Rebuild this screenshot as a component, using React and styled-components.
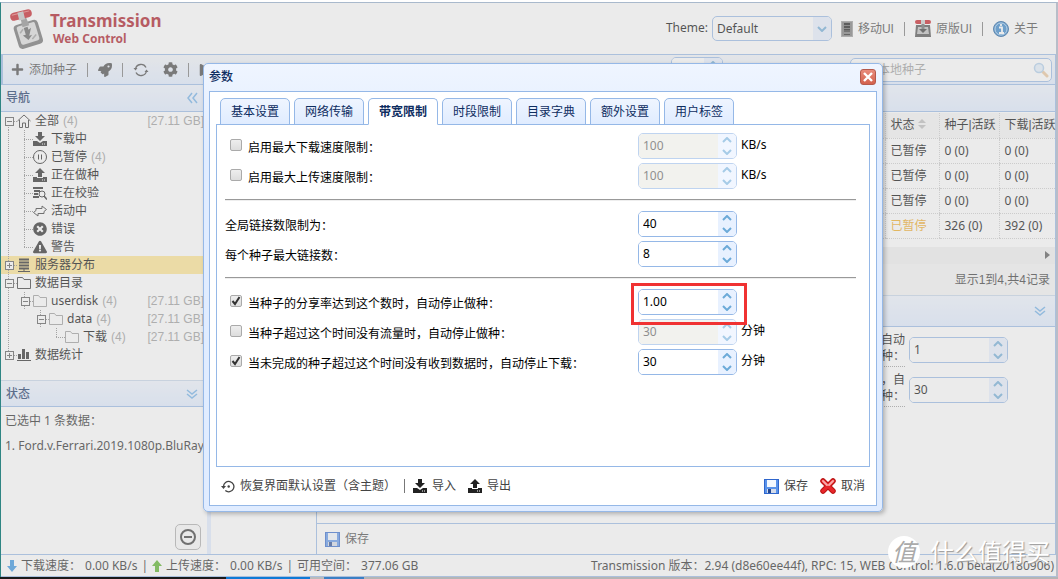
import React from "react";
import styled, { createGlobalStyle, css } from "styled-components";
import {
  FaPlus,
  FaRocket,
  FaCog,
  FaTimesCircle,
  FaExclamationTriangle,
  FaPlay,
  FaPause,
  FaTrashAlt,
} from "react-icons/fa";

const treeItems = [
  { cells: ["minusTop"], icon: "home", text: "全部", count: 4, size: "27.11 GB" },
  { cells: ["line", "join"], icon: "download", text: "下载中" },
  { cells: ["line", "join"], icon: "pause", text: "已暂停", count: 4 },
  { cells: ["line", "join"], icon: "upload", text: "正在做种" },
  { cells: ["line", "join"], icon: "check", text: "正在校验" },
  { cells: ["line", "join"], icon: "active", text: "活动中" },
  { cells: ["line", "join"], icon: "error", text: "错误" },
  { cells: ["line", "joinEnd"], icon: "warning", text: "警告" },
  { cells: ["plus"], icon: "server", text: "服务器分布", selected: true },
  { cells: ["minus"], icon: "folder", text: "数据目录" },
  { cells: ["line", "minus"], icon: "folder", text: "userdisk", count: 4, size: "27.11 GB", pale: true },
  { cells: ["line", "blank", "minus"], icon: "folder", text: "data", count: 4, size: "27.11 GB", pale: true },
  { cells: ["line", "blank", "blank", "joinEnd"], icon: "folder", text: "下载", count: 4, size: "27.11 GB", pale: true },
  { cells: ["plusEnd"], icon: "chart", text: "数据统计" },
];

const torrents = [
  { status: "已暂停", seeds: "0 (0)", peers: "0 (0)" },
  { status: "已暂停", seeds: "0 (0)", peers: "0 (0)" },
  { status: "已暂停", seeds: "0 (0)", peers: "0 (0)" },
  { status: "已暂停", seeds: "326 (0)", peers: "392 (0)", warning: true },
];

const tabs = ["基本设置", "网络传输", "带宽限制", "时段限制", "目录字典", "额外设置", "用户标签"];

export default function App() {
  return (
    <>
      <GlobalStyle />
      <Page>
        <Frame>
          <Header />
          <Toolbar />
          <Workspace>
            <Sidebar />
            <Splitter />
            <Main />
          </Workspace>
          <StatusBar />
          <Mask />
          <SettingsDialog />
          <Watermark>
            <WatermarkLogo>值</WatermarkLogo>
            什么值得买
          </Watermark>
        </Frame>
        <Taskbar />
      </Page>
    </>
  );
}

function Header() {
  return (
    <HeaderBar>
      <Brand>
        <LogoIcon />
        <BrandText>
          <BrandName>Transmission</BrandName>
          <BrandSub>Web Control</BrandSub>
        </BrandText>
      </Brand>
      <HeaderLinks>
        <ThemeLabel htmlFor="theme">Theme:</ThemeLabel>
        <SelectBox>
          <ThemeSelect id="theme" defaultValue="Default">
            <option>Default</option>
          </ThemeSelect>
          <SelectArrow>
            <Chevron down />
          </SelectArrow>
        </SelectBox>
        <HeaderLink href="#mobile">
          <PhoneIcon />
          移动UI
        </HeaderLink>
        <Separator />
        <HeaderLink href="#original">
          <OriginalIcon />
          原版UI
        </HeaderLink>
        <Separator />
        <HeaderLink href="#about">
          <InfoIcon />
          关于
        </HeaderLink>
      </HeaderLinks>
    </HeaderBar>
  );
}

function Toolbar() {
  return (
    <ToolbarRow>
      <ToolGroup>
        <ToolButton>
          <FaPlus size={13} />
          添加种子
        </ToolButton>
        <Separator />
        <ToolButton aria-label="rocket">
          <FaRocket size={14} />
        </ToolButton>
        <Separator />
        <ToolButton aria-label="refresh">
          <RefreshIcon />
        </ToolButton>
        <ToolButton aria-label="config">
          <FaCog size={15} />
        </ToolButton>
        <Separator />
        <ToolButton aria-label="start">
          <FaPlay size={12} />
        </ToolButton>
        <ToolButton aria-label="pause">
          <FaPause size={12} />
        </ToolButton>
        <ToolButton aria-label="remove">
          <FaTrashAlt size={12} />
        </ToolButton>
      </ToolGroup>
      <ToolGroup>
        <Spinner id="reload" value="5" label="reload" />
        <SearchBox>
          <SearchInput aria-label="搜索" placeholder="搜索本地种子" />
          <SearchIcon />
        </SearchBox>
      </ToolGroup>
    </ToolbarRow>
  );
}

function Sidebar() {
  return (
    <SidebarColumn>
      <PanelHeader>
        导航
        <DoubleChevron left />
      </PanelHeader>
      <Tree>
        {treeItems.map((item, index) => (
          <TreeRow key={index} $selected={item.selected}>
            {item.cells.map((cell, i) => (
              <TreeCell key={i} $kind={cell}>
                {/^(minus|plus)/.test(cell) && <Expander plus={cell.startsWith("plus")} />}
              </TreeCell>
            ))}
            <TreeIcon $pale={item.pale}>{treeIcons[item.icon]}</TreeIcon>
            <span>{item.text}</span>
            {item.count && <Muted>({item.count})</Muted>}
            {item.size && <TreeSize>[{item.size}]</TreeSize>}
          </TreeRow>
        ))}
      </Tree>
      <PanelHeader $top>
        状态
        <DoubleChevron />
      </PanelHeader>
      <StatusBody>
        <StatusLine>已选中 1 条数据：</StatusLine>
        <StatusLine>1. Ford.v.Ferrari.2019.1080p.BluRay</StatusLine>
      </StatusBody>
      <CollapseButton aria-label="collapse">
        <svg width="18" height="18" viewBox="0 0 18 18" fill="none" stroke="#333" strokeWidth="2">
          <circle cx="9" cy="9" r="7" />
          <path d="M5 9h8" />
        </svg>
      </CollapseButton>
    </SidebarColumn>
  );
}

function Main() {
  return (
    <MainColumn>
      <PanelHeader />
      <TorrentTable>
        <thead>
          <tr>
            <Th />
            <Th $width={54}>
              状态 <SortIcon />
            </Th>
            <Th $width={60}>种子|活跃</Th>
            <Th $width={56}>下载|活跃</Th>
          </tr>
        </thead>
        <tbody>
          {torrents.map((row, index) => (
            <tr key={index}>
              <Td />
              <Td $warning={row.warning}>{row.status}</Td>
              <Td>{row.seeds}</Td>
              <Td>{row.peers}</Td>
            </tr>
          ))}
        </tbody>
      </TorrentTable>
      <ScrollTrack>
        <svg width="5" height="8" viewBox="0 0 5 8">
          <path d="M0 0l5 4-5 4z" fill="#505050" />
        </svg>
      </ScrollTrack>
      <Pager>显示1到4,共4记录</Pager>
      <PanelHeader $top $tall>
        <span />
        <DoubleChevron />
      </PanelHeader>
      <Detail>
        <DetailBody>
          <DetailRow>
            <DetailLabel htmlFor="detail-ratio">
              达到这个数时，自动
              <br />
              停止做种：
            </DetailLabel>
            <Spinner id="detail-ratio" value="1" />
          </DetailRow>
          <DetailRow>
            <DetailLabel htmlFor="detail-idle">
              没有流量时，自
              <br />
              动停止做种：
            </DetailLabel>
            <Spinner id="detail-idle" value="30" />
          </DetailRow>
        </DetailBody>
        <DetailFooter>
          <ToolButton>
            <SaveIcon />
            保存
          </ToolButton>
        </DetailFooter>
      </Detail>
    </MainColumn>
  );
}

function StatusBar() {
  return (
    <StatusFooter>
      <FooterGroup>
        <ArrowIcon color="#2f8fe0" down />
        <span>下载速度：</span>
        <span>0.00 KB/s</span>
        <span>|</span>
        <ArrowIcon color="#52b01e" />
        <span>上传速度：</span>
        <span>0.00 KB/s</span>
        <span>|</span>
        <span>可用空间：</span>
        <span>377.06 GB</span>
      </FooterGroup>
      <span>Transmission 版本：2.94 (d8e60ee44f), RPC: 15, WEB Control: 1.6.0 beta(20180906)</span>
    </StatusFooter>
  );
}

function SettingsDialog() {
  return (
    <Dialog role="dialog" aria-labelledby="dialog-title">
      <DialogHeader>
        <DialogTitle id="dialog-title">参数</DialogTitle>
        <CloseButton aria-label="close">
          <svg width="10" height="10" viewBox="0 0 10 10" stroke="#fff" strokeWidth="2.4">
            <path d="M1 1l8 8M9 1l-8 8" />
          </svg>
        </CloseButton>
      </DialogHeader>
      <DialogBody>
        <TabList role="tablist">
          {tabs.map((tab) => (
            <Tab key={tab} role="tab" $active={tab === "带宽限制"} aria-selected={tab === "带宽限制"}>
              {tab}
            </Tab>
          ))}
        </TabList>
        <TabPanel>
          <Setting id="limit-down" check label="启用最大下载速度限制：" value="100" unit="KB/s" disabled />
          <Setting id="limit-up" check label="启用最大上传速度限制：" value="100" unit="KB/s" disabled />
          <Divider />
          <Setting id="peer-global" label="全局链接数限制为：" value="40" />
          <Setting id="peer-torrent" label="每个种子最大链接数：" value="8" />
          <Divider />
          <Setting
            id="seed-ratio"
            check
            checked
            label="当种子的分享率达到这个数时，自动停止做种："
            value="1.00"
            highlight
          />
          <Setting id="seed-idle" check label="当种子超过这个时间没有流量时，自动停止做种：" value="30" unit="分钟" disabled />
          <Setting
            id="queue-stalled"
            check
            checked
            label="当未完成的种子超过这个时间没有收到数据时，自动停止下载："
            value="30"
            unit="分钟"
          />
        </TabPanel>
        <DialogFooter>
          <FooterButtons>
            <ToolButton>
              <RestoreIcon />
              恢复界面默认设置（含主题）
            </ToolButton>
            <Separator />
            <ToolButton>
              {treeIcons.download}
              导入
            </ToolButton>
            <ToolButton>
              {treeIcons.upload}
              导出
            </ToolButton>
          </FooterButtons>
          <FooterButtons>
            <ToolButton>
              <SaveIcon />
              保存
            </ToolButton>
            <ToolButton>
              <CancelIcon />
              取消
            </ToolButton>
          </FooterButtons>
        </DialogFooter>
      </DialogBody>
    </Dialog>
  );
}

function Setting({ id, check, checked, label, value, unit, disabled, highlight }) {
  return (
    <SettingRow>
      <SettingName>
        {check && <Checkbox type="checkbox" id={id + "-on"} defaultChecked={checked} />}
        <SettingLabel htmlFor={check ? id + "-on" : id}>{label}</SettingLabel>
      </SettingName>
      <SettingField>
        <Spinner id={id} value={value} disabled={disabled} label={label} />
        {highlight && <Highlight />}
        {unit && <Unit>{unit}</Unit>}
      </SettingField>
    </SettingRow>
  );
}

function Spinner({ id, value, disabled, label }) {
  return (
    <SpinnerBox $disabled={disabled} $small={id === "reload"}>
      <SpinnerInput id={id} defaultValue={value} disabled={disabled} aria-label={label} />
      <SpinnerArrows>
        <ArrowButton aria-label="up" disabled={disabled}>
          <Chevron />
        </ArrowButton>
        <ArrowButton aria-label="down" disabled={disabled}>
          <Chevron down />
        </ArrowButton>
      </SpinnerArrows>
    </SpinnerBox>
  );
}

/* icons */

function Chevron({ down }) {
  return (
    <svg width="10" height="6" viewBox="0 0 10 6" fill="none" stroke="#6caad8" strokeWidth="2">
      <path d={down ? "M1 1l4 4 4-4" : "M1 5l4-4 4 4"} />
    </svg>
  );
}

function DoubleChevron({ left }) {
  return (
    <svg width="12" height="12" viewBox="0 0 12 12" fill="none" stroke="#6caee8" strokeWidth="1.5">
      <path d={left ? "M6 1L2 6l4 5M11 1L7 6l4 5" : "M1 2l5 4 5-4M1 6l5 4 5-4"} />
    </svg>
  );
}

function Expander({ plus }) {
  return (
    <svg width="9" height="9" viewBox="0 0 9 9" stroke="#555" fill="#fff">
      <rect x="0.5" y="0.5" width="8" height="8" />
      <path d={plus ? "M2 4.5h5M4.5 2v5" : "M2 4.5h5"} />
    </svg>
  );
}

function LogoIcon() {
  return (
    <svg width="37" height="42" viewBox="0 0 37 42">
      <g transform="rotate(-17 19 27)">
        <rect x="7" y="14" width="25" height="25" rx="4" fill="#6c6c6c" />
        <rect x="10" y="16" width="19" height="19" rx="2" fill="#dcdcdc" />
        <path d="M17 6h5l1 12h-7z" fill="#8a8a8a" />
        <path d="M17 19v7h-3l4 6 5-4h-3l4-7-3 1v-3z" fill="#5c5c5c" />
        <path d="M12 23l4-3M22 32l5-3" stroke="#999" strokeWidth="1.5" />
      </g>
      <g transform="rotate(-14 12 7)">
        <rect x="1" y="3" width="22" height="8" rx="4" fill="#c4161f" />
        <path d="M3 5h7M15 5h6" stroke="#ec7a7a" />
        <rect x="9" y="4" width="6" height="8" fill="#c2c2c2" />
      </g>
    </svg>
  );
}

function PhoneIcon() {
  return (
    <svg width="12" height="16" viewBox="0 0 12 16">
      <rect x="0.5" y="0.5" width="11" height="15" fill="#777" stroke="#999" />
      <rect x="3" y="2" width="6" height="9" fill="#111" />
      <path d="M3 4.5h6M3 7.5h6M3 10h6" stroke="#666" />
      <path d="M3 13.5h6" stroke="#222" />
    </svg>
  );
}

function OriginalIcon() {
  return (
    <svg width="16" height="17" viewBox="0 0 16 17">
      <path d="M1 5h14l1 12H0z" fill="#4a4a4a" />
      <path d="M3 7h10l1 7H2z" fill="#bbb" />
      <path d="M6.5 3h3v6h-3z" fill="#666" />
      <path d="M4 9l4 4 4-4z" fill="#333" />
      <rect x="0" y="0" width="16" height="4" rx="2" fill="#c5161d" />
      <rect x="6" y="0" width="4" height="4" fill="#ccc" />
    </svg>
  );
}

function InfoIcon() {
  return (
    <svg width="16" height="16" viewBox="0 0 16 16">
      <circle cx="8" cy="8" r="7.5" fill="#2f80c8" stroke="#1c5c9c" />
      <circle cx="8" cy="8" r="6" fill="none" stroke="#a9d2f4" />
      <path d="M6 6.5h3v5M6 12h5M8 3v2" stroke="#fff" strokeWidth="1.8" fill="none" />
    </svg>
  );
}

function RefreshIcon() {
  return (
    <svg width="16" height="14" viewBox="0 0 16 14" fill="none" stroke="#444" strokeWidth="1.3">
      <path d="M2.5 6A5.6 5.6 0 0 1 13 4.5M13.5 8A5.6 5.6 0 0 1 3 9.5" />
      <path d="M0.5 5l2 2.5 2-2.5zM11.5 9l2-2.5 2 2.5z" fill="#444" stroke="none" />
    </svg>
  );
}

function SearchIcon() {
  return (
    <svg width="16" height="16" viewBox="0 0 16 16" fill="none" opacity="0.6">
      <path d="M10 10l4 4" stroke="#e0a057" strokeWidth="3" strokeLinecap="round" />
      <circle cx="6" cy="6" r="4.5" fill="#d4e8fb" stroke="#7aaee0" strokeWidth="1.5" />
    </svg>
  );
}

function SortIcon() {
  return (
    <svg width="8" height="10" viewBox="0 0 8 10" fill="#bbb">
      <path d="M0 4l4-4 4 4zM0 6l4 4 4-4z" />
    </svg>
  );
}

function SaveIcon() {
  return (
    <svg width="15" height="15" viewBox="0 0 15 15">
      <rect x="0.5" y="0.5" width="14" height="14" fill="#5a93ea" stroke="#2f66cc" />
      <rect x="3" y="1" width="9" height="7" fill="#f4f9ff" />
      <rect x="3" y="10" width="9" height="4" fill="#d5dcea" />
      <rect x="4" y="10" width="3" height="4" fill="#24468f" />
    </svg>
  );
}

function CancelIcon() {
  return (
    <svg width="16" height="16" viewBox="0 0 16 16" strokeLinecap="round" fill="none">
      <path d="M3 3l10 10M13 3L3 13" stroke="#b91414" strokeWidth="5.5" />
      <path d="M3 3l10 10M13 3L3 13" stroke="#e8262a" strokeWidth="3.5" />
      <path d="M3 3l4 4M13 3L9 7" stroke="#f9aaaa" strokeWidth="2" />
    </svg>
  );
}

function RestoreIcon() {
  return (
    <svg width="14" height="13" viewBox="0 0 14 13" fill="none" stroke="#444" strokeWidth="1.3">
      <path d="M2.5 6.5a5.2 5.2 0 1 1 1.8 4" />
      <path d="M0 6h5L2.5 9z" fill="#444" stroke="none" />
      <circle cx="7.7" cy="6.5" r="1.2" fill="#444" stroke="none" />
    </svg>
  );
}

function ArrowIcon({ color, down }) {
  return (
    <svg width="10" height="12" viewBox="0 0 10 12" fill={color}>
      <path d={down ? "M3 0h4v6h3l-5 6-5-6h3z" : "M3 12h4V6h3L5 0 0 6h3z"} />
    </svg>
  );
}

const treeIcons = {
  home: (
    <svg width="14" height="14" viewBox="0 0 14 14" fill="none" stroke="#333">
      <path d="M0.5 7L7 1l6.5 6M2.5 6v7.5h3V9h3v4.5h3V6" />
    </svg>
  ),
  download: (
    <svg width="14" height="14" viewBox="0 0 14 14" fill="#222">
      <path d="M5 0h4v4h3L7 9 2 4h3zM0 9h4l3 2 3-2h4v5H0z" />
      <path d="M9 12h1M11 12h1" stroke="#fff" />
    </svg>
  ),
  upload: (
    <svg width="14" height="14" viewBox="0 0 14 14" fill="#222">
      <path d="M7 0l5 5H9v4H5V5H2zM0 9h4v1h6V9h4v5H0z" />
      <path d="M9 12h1M11 12h1" stroke="#fff" />
    </svg>
  ),
  pause: (
    <svg width="14" height="14" viewBox="0 0 14 14" fill="none" stroke="#222">
      <circle cx="7" cy="7" r="6.5" />
      <path d="M5.5 4.5v5M8.5 4.5v5" />
    </svg>
  ),
  check: (
    <svg width="14" height="14" viewBox="0 0 14 14" fill="none" stroke="#222">
      <path d="M0 2h10M1 5h6M1 8h4M0 11h6" strokeWidth="2" />
      <circle cx="9" cy="8" r="3" />
      <path d="M11 10l3 3.5" strokeWidth="1.5" />
    </svg>
  ),
  active: (
    <svg width="14" height="14" viewBox="0 0 14 14" fill="none" stroke="#333">
      <path d="M3 6.5v-2h6V2l4.5 3.5-2.500 2M11 7.500v2H5V12L0.500 8.500 3 6.500" />
    </svg>
  ),
  error: <FaTimesCircle size={14} color="#222" />,
  warning: <FaExclamationTriangle size={14} color="#222" />,
  server: (
    <svg width="14" height="14" viewBox="0 0 14 14" stroke="#222" fill="none">
      <path d="M2 1.5h10M2 4.5h10M2 7.5h10M2 10.5h10" strokeWidth="2" />
      <path d="M7 11v2.5M1 13.5h12" />
    </svg>
  ),
  folder: (
    <svg width="14" height="12" viewBox="0 0 14 12" fill="none" stroke="currentColor">
      <path d="M0.5 11.5v-11h5l1.5 2h6.5v9z" />
    </svg>
  ),
  chart: (
    <svg width="14" height="12" viewBox="0 0 14 12" fill="#222">
      <path d="M0 11h14v1H0zM1 5h3v5H1zM5 0h3v10H5zM9 3h3v7H9z" />
    </svg>
  ),
};

/* styles */

const GlobalStyle = createGlobalStyle`
  * {
    box-sizing: border-box;
  }
  body {
    margin: 0;
    background: #fff;
    color: #000;
    font: 12px/18px "Noto Sans", "Noto Sans CJK SC", sans-serif;
  }
  button, input, select {
    font: inherit;
    color: inherit;
  }
  svg {
    flex: none;
  }
`;

const arial = `"Liberation Sans", "Noto Sans CJK SC", sans-serif`;

const Page = styled.div`
  display: flex;
  flex-direction: column;
  min-height: 100vh;
  padding-top: 2px;
`;

const Frame = styled.div`
  position: relative;
  flex: 1;
  display: flex;
  flex-direction: column;
  border-top: 1px solid #a9b9cc;
  border-left: 1px solid #2f8583;
  border-right: 2px solid #b8bdc8;
  overflow: hidden;
`;

const Taskbar = styled.div`
  height: 2px;
  background: linear-gradient(90deg, #1a1a1a 0 226px, #0f7ad6 226px 310px, #bbb 310px 324px, #3b7fc4 324px 364px, #b5b5b5 364px);
`;

const HeaderBar = styled.header`
  display: flex;
  align-items: center;
  justify-content: space-between;
  height: 51px;
  padding: 0 11px 0 8px;
`;

const Brand = styled.div`
  display: flex;
  align-items: center;
  gap: 4px;
`;

const BrandText = styled.div`
  color: #a80f1c;
  font-weight: bold;
`;

const BrandName = styled.div`
  font-size: 17px;
  line-height: 20px;
`;

const BrandSub = styled.div`
  padding-left: 3px;
  line-height: 16px;
`;

const HeaderLinks = styled.div`
  display: flex;
  align-items: center;
  gap: 2px;
`;

const ThemeLabel = styled.label`
  padding: 0 2px 2px 0;
`;

const HeaderLink = styled.a`
  display: flex;
  align-items: center;
  gap: 5px;
  padding: 0 7px;
  color: #444;
  font-family: ${arial};
  text-decoration: none;
`;

const Separator = styled.span`
  width: 1px;
  height: 14px;
  margin: 0 1px;
  background: #777;
`;

const SelectBox = styled.div`
  display: flex;
  position: relative;
  width: 120px;
  height: 25px;
  border: 1px solid #95b8e7;
  border-radius: 5px;
  overflow: hidden;
`;

const ThemeSelect = styled.select`
  appearance: none;
  flex: 1;
  padding: 0 4px;
  border: 0;
  background: transparent;
  outline: 0;
`;

const SelectArrow = styled.span`
  position: absolute;
  right: 0;
  display: flex;
  align-items: center;
  justify-content: center;
  width: 18px;
  height: 100%;
  background: #e8f1ff;
  pointer-events: none;
`;

const ToolbarRow = styled.div`
  display: flex;
  align-items: center;
  justify-content: space-between;
  height: 31px;
  padding: 0 3px;
  border: 1px solid #95b8e7;
  border-width: 1px 1px 1px 2px;
  background: linear-gradient(#f2f5fa, #e0ecff);
`;

const ToolGroup = styled.div`
  display: flex;
  align-items: center;
  gap: 4px;
  & > div + div {
    margin-left: 123px;
  }
`;

const ToolButton = styled.button`
  display: flex;
  align-items: center;
  gap: 5px;
  padding: 0 5px;
  border: 0;
  background: none;
  color: #444;
  line-height: 24px;
  white-space: nowrap;
`;

const SearchBox = styled.div`
  display: flex;
  align-items: center;
  width: 202px;
  height: 24px;
  padding-right: 2px;
  border: 1px solid #95b8e7;
  border-radius: 5px;
  background: #fff;
`;

const SearchInput = styled.input`
  flex: 1;
  min-width: 0;
  padding: 0 3px;
  border: 0;
  outline: 0;
  background: none;
  &::placeholder {
    color: #999;
  }
`;

const Workspace = styled.div`
  flex: 1;
  display: grid;
  grid-template-columns: 206px 4px 1fr;
`;

const SidebarColumn = styled.aside`
  display: flex;
  flex-direction: column;
  overflow: hidden;
`;

const Splitter = styled.div`
  background: #e0ecff;
`;

const PanelHeader = styled.div`
  display: flex;
  align-items: center;
  justify-content: space-between;
  height: ${(props) => (props.$tall ? "32px" : "27px")};
  padding: 0 9px 0 5px;
  border-bottom: 1px solid #95b8e7;
  ${(props) => props.$top && "border-top: 1px solid #c5d5ea;"}
  background: linear-gradient(#eff5ff, #e0ecff);
  color: #0e2d5f;
  font-weight: 500;
`;

const Tree = styled.ul`
  height: 268px;
  margin: 0;
  padding: 0;
  list-style: none;
`;

const TreeRow = styled.li`
  display: flex;
  align-items: center;
  height: 18px;
  white-space: nowrap;
  background: ${(props) => (props.$selected ? "#ffe48d" : "none")};
`;

const vertical = "repeating-linear-gradient(#888 0 1px, transparent 1px 2px)";
const horizontal = "repeating-linear-gradient(90deg, #888 0 1px, transparent 1px 2px)";

const TreeCell = styled.span`
  display: flex;
  align-items: center;
  justify-content: center;
  width: 16px;
  height: 18px;
  background-repeat: no-repeat;
  ${({ $kind }) => {
    if ($kind === "blank") return "";
    if ($kind === "line")
      return css`
        background-image: ${vertical};
        background-size: 1px 18px;
        background-position: 7px 0;
      `;
    const half = $kind.endsWith("End") || $kind.endsWith("Top");
    return css`
      background-image: ${vertical}, ${horizontal};
      background-size: 1px ${half ? "9px" : "18px"}, 9px 1px;
      background-position: 7px ${$kind.endsWith("Top") ? "9px" : "0"}, 7px 9px;
    `;
  }}
`;

const TreeIcon = styled.span`
  display: flex;
  align-items: center;
  width: 18px;
  color: ${(props) => (props.$pale ? "#999" : "#333")};
`;

const Muted = styled.span`
  padding-left: 4px;
  color: #999;
  font-family: ${arial};
`;

const TreeSize = styled(Muted)`
  margin-left: auto;
  padding-right: 3px;
`;

const StatusBody = styled.div`
  flex: 1;
  padding: 5px 0 0 4px;
`;

const StatusLine = styled.div`
  color: #222;
  line-height: 18px;
  white-space: nowrap;
  & + & {
    margin-top: 7px;
  }
`;

const CollapseButton = styled.button`
  display: flex;
  align-items: center;
  justify-content: center;
  align-self: flex-end;
  width: 26px;
  height: 26px;
  margin: 0 6px 4px 0;
  padding: 0;
  border: 1px solid #aaa;
  border-radius: 5px;
  background: #fafafa;
`;

const MainColumn = styled.main`
  display: flex;
  flex-direction: column;
  min-width: 0;
  border-right: 1px solid #95b8e7;
`;

const TorrentTable = styled.table`
  width: 100%;
  table-layout: fixed;
  border-collapse: collapse;
  margin: 1px 0 8px;
`;

const cell = css`
  height: 25px;
  padding: 0 0 0 5px;
  border: 1px dotted #ccc;
  border-right: 0;
  text-align: left;
  font-weight: normal;
  white-space: nowrap;
`;

const Th = styled.th`
  ${cell}
  width: ${(props) => (props.$width ? props.$width + "px" : "auto")};
  border-top: 0;
  background: #f5f5f5;
  font-family: ${arial};
`;

const Td = styled.td`
  ${cell}
  color: ${(props) => (props.$warning ? "#f0a818" : "#000")};
`;

const ScrollTrack = styled.div`
  display: flex;
  align-items: center;
  justify-content: flex-end;
  height: 17px;
  padding-right: 5px;
  background: #f1f1f1;
`;

const Pager = styled.div`
  height: 31px;
  padding-right: 5px;
  background: #f5f5f5;
  color: #333;
  font-family: ${arial};
  line-height: 32px;
  text-align: right;
`;

const Detail = styled.div`
  flex: 1;
  display: flex;
  flex-direction: column;
  margin-left: 105px;
  border-left: 1px solid #95b8e7;
`;

const DetailBody = styled.div`
  flex: 1;
  display: flex;
  flex-direction: column;
  align-items: flex-end;
  gap: 2px;
  padding: 4px 47px 0 0;
`;

const DetailRow = styled.div`
  display: flex;
  align-items: center;
  gap: 4px;
  height: 38px;
`;

const DetailLabel = styled.label`
  padding-bottom: 2px;
  border-bottom: 1px dotted #999;
  line-height: 16px;
  text-align: right;
`;

const DetailFooter = styled.div`
  display: flex;
  align-items: center;
  height: 31px;
  padding-left: 3px;
  border-top: 1px solid #95b8e7;
`;

const StatusFooter = styled.footer`
  display: flex;
  align-items: center;
  justify-content: space-between;
  height: 23px;
  padding: 0 2px 0 6px;
  border-top: 1px solid #95b8e7;
  border-bottom: 1px solid #95b8e7;
  color: #222;
`;

const FooterGroup = styled.div`
  display: flex;
  align-items: center;
  gap: 4px;
`;

const Mask = styled.div`
  position: absolute;
  inset: 0;
  background: rgba(204, 204, 204, 0.4);
`;

const Dialog = styled.section`
  position: absolute;
  top: 60px;
  left: 202px;
  right: 173px;
  padding: 5px;
  border: 1px solid #95b8e7;
  border-radius: 5px;
  background: linear-gradient(#eff5ff, #e0ecff 20%);
  box-shadow: 2px 2px 4px rgba(0, 0, 0, 0.25);
`;

const DialogHeader = styled.div`
  display: flex;
  align-items: center;
  justify-content: space-between;
  height: 22px;
  padding: 0 1px 6px 0;
`;

const DialogTitle = styled.h1`
  margin: 0;
  color: #0e2d5f;
  font-size: 12px;
  font-weight: 500;
`;

const CloseButton = styled.button`
  display: flex;
  align-items: center;
  justify-content: center;
  width: 16px;
  height: 16px;
  padding: 0;
  border: 1px solid #b5594b;
  border-radius: 3px;
  background: linear-gradient(#e88c7c, #d4614c);
`;

const DialogBody = styled.div`
  padding: 6px 6px 0;
  border: 1px solid #95b8e7;
  background: #fff;
`;

const TabList = styled.div`
  display: flex;
  gap: 4px;
  padding-left: 4px;
`;

const Tab = styled.button`
  width: 70px;
  height: 27px;
  margin-bottom: -1px;
  padding: 0;
  border: 1px solid #95b8e7;
  border-bottom-color: ${(props) => (props.$active ? "#fff" : "#95b8e7")};
  border-radius: 5px 5px 0 0;
  background: ${(props) => (props.$active ? "#fff" : "linear-gradient(#eff5ff, #e0ecff)")};
  color: #0e2d5f;
  font-weight: ${(props) => (props.$active ? "bold" : "normal")};
`;

const TabPanel = styled.div`
  display: flex;
  flex-direction: column;
  gap: 4px;
  min-height: 343px;
  padding: 8px 13px 8px 8px;
  border: 1px solid #95b8e7;
`;

const SettingRow = styled.div`
  display: grid;
  grid-template-columns: 413px 1fr;
`;

const SettingName = styled.div`
  display: flex;
  align-items: center;
`;

const SettingLabel = styled.label`
  padding-top: 3px;
`;

const Checkbox = styled.input`
  appearance: none;
  width: 12px;
  height: 12px;
  margin: 0 6px 2px 5px;
  border: 1px solid #aaa;
  border-radius: 2px;
  background: linear-gradient(#eee, #ddd);
  &:checked {
    background: url("data:image/svg+xml,%3Csvg xmlns='http://www.w3.org/2000/svg' viewBox='0 0 10 10' fill='none' stroke='%23333' stroke-width='2'%3E%3Cpath d='M1.500 5l2.500 3 4.500-7'/%3E%3C/svg%3E")
        center / 10px no-repeat,
      linear-gradient(#eee, #ddd);
  }
`;

const SettingField = styled.div`
  position: relative;
  display: flex;
  align-items: center;
  gap: 4px;
`;

const Unit = styled.span`
  padding-bottom: 2px;
`;

const Highlight = styled.div`
  position: absolute;
  top: -6px;
  left: -7px;
  z-index: 1;
  width: 116px;
  height: 42px;
  border: 3px solid #f03232;
  pointer-events: none;
`;

const SpinnerBox = styled.div`
  display: flex;
  width: ${(props) => (props.$small ? "52px" : "99px")};
  height: 26px;
  border: 1px solid #95b8e7;
  border-radius: 5px;
  overflow: hidden;
  opacity: ${(props) => (props.$disabled ? 0.6 : 1)};
`;

const SpinnerInput = styled.input`
  flex: 1;
  min-width: 0;
  padding: 0 4px;
  border: 0;
  outline: 0;
  background: #fff;
  &:disabled {
    background: #ebebe4;
    color: #444;
  }
`;

const SpinnerArrows = styled.div`
  display: flex;
  flex-direction: column;
  width: 18px;
  background: #e8f1ff;
`;

const ArrowButton = styled.button`
  flex: 1;
  display: flex;
  align-items: center;
  justify-content: center;
  padding: 0;
  border: 0;
  background: none;
`;

const Divider = styled.hr`
  width: 100%;
  margin: 6px 0;
  border: 0;
  border-top: 1px solid #999;
  border-bottom: 1px solid #eee;
`;

const DialogFooter = styled.div`
  display: flex;
  align-items: center;
  justify-content: space-between;
  height: 38px;
`;

const FooterButtons = styled.div`
  display: flex;
  align-items: center;
  gap: 2px;
`;

const Watermark = styled.div`
  position: absolute;
  right: 6px;
  bottom: 9px;
  display: flex;
  align-items: center;
  gap: 10px;
  color: #fff;
  font-size: 24px;
  line-height: 32px;
  text-shadow: 1px 1px 1px #999;
`;

const WatermarkLogo = styled.span`
  width: 32px;
  height: 32px;
  border-radius: 50%;
  background: #fff;
  color: #aaa;
  font-style: italic;
  text-align: center;
  text-shadow: none;
`;
